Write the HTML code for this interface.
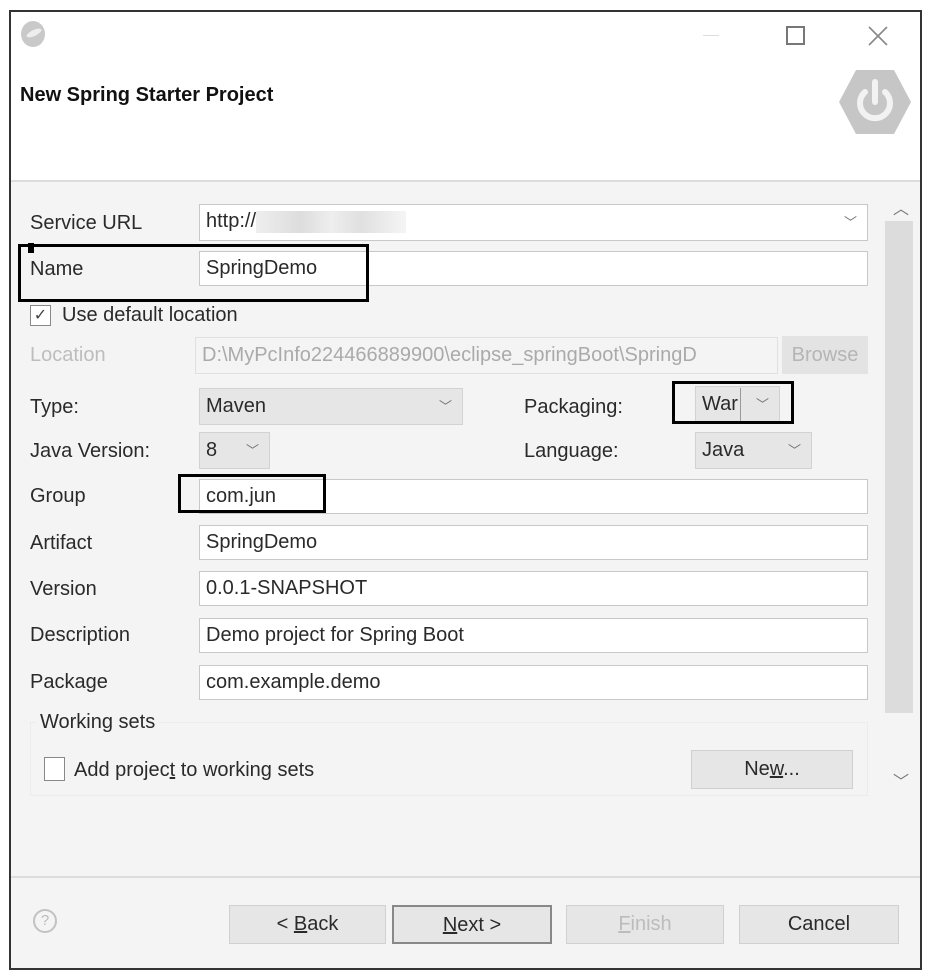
<!DOCTYPE html>
<html><head><meta charset="utf-8"><style>
*{box-sizing:border-box;margin:0;padding:0}
body{width:931px;height:977px;background:#fff;position:relative;overflow:hidden;font-family:"Liberation Sans Narrow","Liberation Sans",sans-serif;font-size:20px;color:#2a2a2a}
.a{position:absolute}
.lbl{position:absolute;left:30px;line-height:24px}
.in{position:absolute;left:199px;width:669px;height:35px;background:#fff;border:1px solid #c8c8c8;padding-left:6px;line-height:33px}
.cb{position:absolute;background:#e6e6e6;border:1px solid #d2d2d2;padding-left:6px;line-height:35px}
.dd{position:absolute;right:10px;top:0;font-size:13px;color:#777}
.btn{position:absolute;top:905px;height:39px;background:#e6e6e6;border:1px solid #d0d0d0;text-align:center;line-height:37px}
.box{position:absolute;border:3px solid #000}
</style></head><body>
<div class="a" style="left:9px;top:10px;width:913px;height:960px;border:2px solid #333;background:#f4f4f4"></div>
<div class="a" style="left:11px;top:12px;width:909px;height:170px;background:#fff;border-bottom:2px solid #dcdcdc"></div>
<div class="a" style="left:11px;top:876px;width:909px;height:2px;background:#dcdcdc"></div>
<div class="a" style="left:21px;top:21px;width:24px;height:26px;border-radius:50%;background:#c9c9c9"></div>
<div class="a" style="left:26px;top:30px;width:16px;height:6px;border-radius:50%;background:#eee;transform:rotate(-25deg)"></div>
<div class="a" style="left:703px;top:35px;width:16px;height:1px;background:#ddd"></div>
<div class="a" style="left:786px;top:26px;width:19px;height:19px;border:2px solid #777"></div>
<svg class="a" style="left:867px;top:25px" width="22" height="22"><path d="M2 2L20 20M20 2L2 20" stroke="#888" stroke-width="1.6"/></svg>
<div class="a" style="left:20px;top:84px;font-family:'Liberation Sans',sans-serif;font-weight:bold;font-size:20px;color:#111">New Spring Starter Project</div>
<svg class="a" style="left:838px;top:68px" width="74" height="68" viewBox="0 0 74 68">
<polygon points="18,2 56,2 73,34 56,66 18,66 1,34" fill="#c6c6c6"/>
<path d="M27 24 A15 15 0 1 0 47 24" fill="none" stroke="#f2f2f2" stroke-width="6" stroke-linecap="round"/>
<line x1="37" y1="14" x2="37" y2="34" stroke="#f2f2f2" stroke-width="6" stroke-linecap="round"/>
</svg>
<div class="lbl" style="top:211px">Service URL</div>
<div class="in" style="top:204px;height:37px">http://<span style="display:inline-block;width:150px;height:22px;vertical-align:middle;background:linear-gradient(90deg,#eee,#ddd 30%,#eee 50%,#e0e0e0 70%,#f5f5f5)"></span><span class="dd" style="line-height:35px">﹀</span></div>
<div class="lbl" style="top:257px">Name</div>
<div class="in" style="top:251px">SpringDemo</div>
<div class="box" style="left:18px;top:244px;width:351px;height:58px"></div>
<div class="a" style="left:28px;top:243px;width:6px;height:10px;background:#000"></div>
<div class="a" style="left:30px;top:305px;width:21px;height:21px;border:1px solid #888;background:#fff;font-size:16px;line-height:19px;text-align:center;color:#444">✓</div>
<div class="a" style="left:62px;top:303px;line-height:24px">Use default location</div>
<div class="lbl" style="top:343px;color:#bdbdbd">Location</div>
<div class="a" style="left:195px;top:337px;width:583px;height:37px;border:1px solid #e0e0e0;padding-left:6px;line-height:35px;color:#aaa;overflow:hidden;white-space:nowrap">D:\MyPcInfo224466889900\eclipse_springBoot\SpringD</div>
<div class="a" style="left:782px;top:336px;width:86px;height:38px;background:#e3e3e3;color:#b5b5b5;text-align:center;line-height:38px">Browse</div>
<div class="lbl" style="top:395px">Type:</div>
<div class="cb" style="left:199px;top:388px;width:264px;height:37px">Maven<span class="dd">﹀</span></div>
<div class="a" style="left:524px;top:395px;line-height:24px">Packaging:</div>
<div class="cb" style="left:695px;top:386px;width:85px;height:38px">War<span class="dd">﹀</span></div>
<div class="a" style="left:740px;top:388px;width:1px;height:34px;background:#999"></div>
<div class="box" style="left:672px;top:381px;width:122px;height:43px"></div>
<div class="lbl" style="top:439px">Java Version:</div>
<div class="cb" style="left:199px;top:432px;width:71px;height:37px">8<span class="dd">﹀</span></div>
<div class="a" style="left:524px;top:439px;line-height:24px">Language:</div>
<div class="cb" style="left:695px;top:432px;width:117px;height:37px">Java<span class="dd">﹀</span></div>
<div class="lbl" style="top:484px">Group</div>
<div class="in" style="top:479px">com.jun</div>
<div class="box" style="left:178px;top:474px;width:148px;height:39px"></div>
<div class="lbl" style="top:531px">Artifact</div>
<div class="in" style="top:525px">SpringDemo</div>
<div class="lbl" style="top:577px">Version</div>
<div class="in" style="top:571px">0.0.1-SNAPSHOT</div>
<div class="lbl" style="top:623px">Description</div>
<div class="in" style="top:618px">Demo project for Spring Boot</div>
<div class="lbl" style="top:670px">Package</div>
<div class="in" style="top:665px">com.example.demo</div>
<div class="a" style="left:30px;top:722px;width:838px;height:74px;border:1px solid #ececec"></div>
<div class="a" style="left:36px;top:710px;line-height:24px;background:#f4f4f4;padding:0 4px">Working sets</div>
<div class="a" style="left:44px;top:757px;width:21px;height:24px;border:1px solid #888;background:#fff"></div>
<div class="a" style="left:74px;top:758px;line-height:24px">Add projec<u>t</u> to working sets</div>
<div class="a" style="left:691px;top:750px;width:162px;height:39px;background:#e6e6e6;border:1px solid #d0d0d0;text-align:center;line-height:37px">Ne<u>w</u>...</div>
<div class="a" style="left:893px;top:195px;font-size:16px;color:#777">︿</div>
<div class="a" style="left:885px;top:221px;width:28px;height:492px;background:#dcdcdc"></div>
<div class="a" style="left:893px;top:768px;font-size:16px;color:#777">﹀</div>
<div class="a" style="left:33px;top:909px;width:24px;height:24px;border:2px solid #c2c2c2;border-radius:50%;text-align:center;font-size:15px;line-height:20px;color:#bbb">?</div>
<div class="btn" style="left:229px;width:157px">&lt; <u>B</u>ack</div>
<div class="btn" style="left:392px;width:160px;border:2px solid #888"><u>N</u>ext &gt;</div>
<div class="btn" style="left:566px;width:158px;color:#bcbcbc"><u>F</u>inish</div>
<div class="btn" style="left:739px;width:160px">Cancel</div>
</body></html>
